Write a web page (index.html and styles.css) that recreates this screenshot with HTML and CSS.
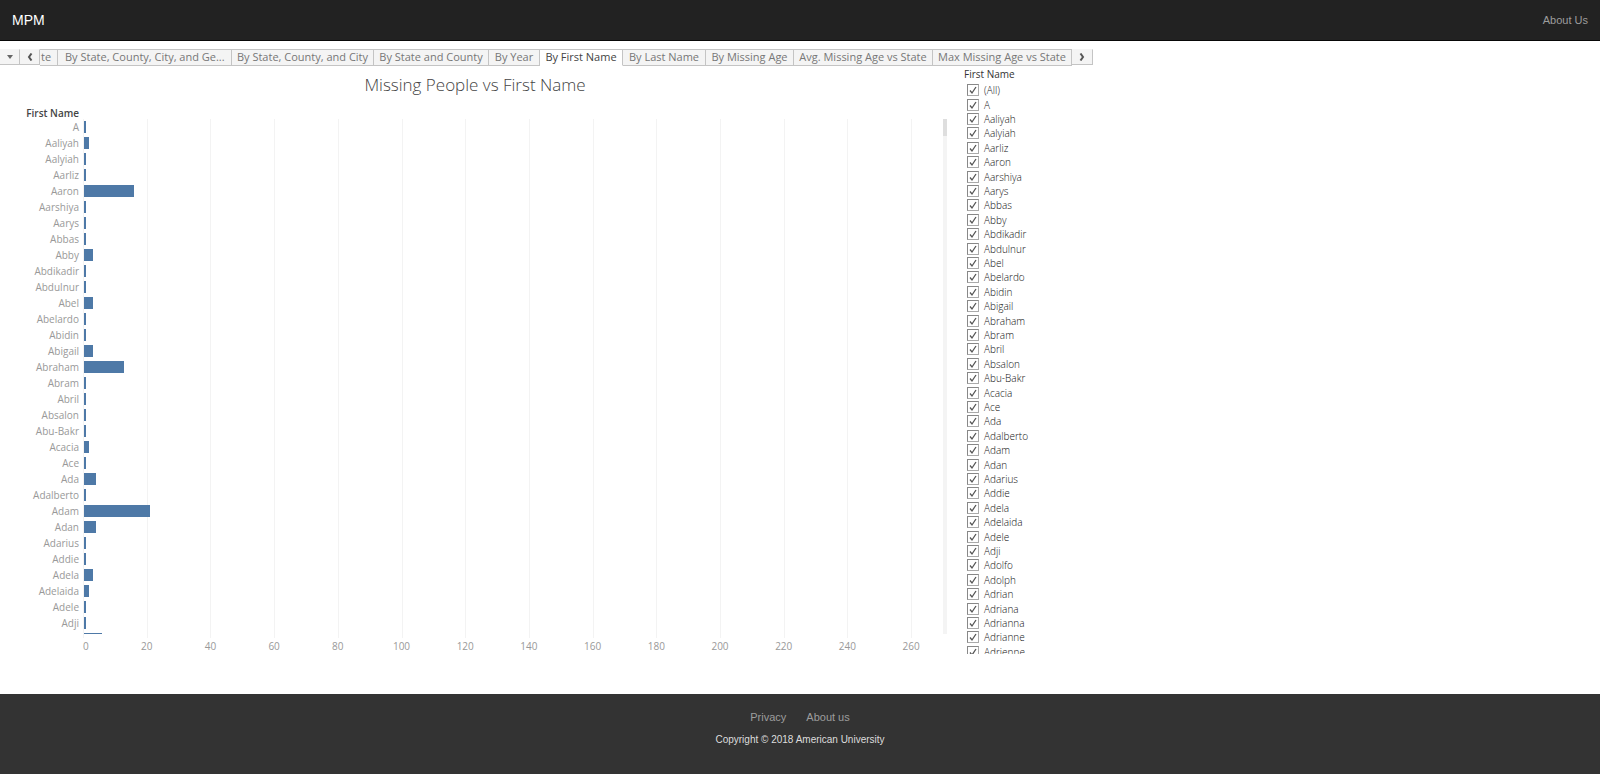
FILE: index.html
```
<!DOCTYPE html>
<html lang="en">
<head>
<meta charset="utf-8">
<title>MPM</title>
<link rel="stylesheet" href="styles.css">
</head>
<body>
<header class="navbar">
  <a class="brand" href="#">MPM</a>
  <nav><a class="nav-link" href="#">About Us</a></nav>
</header>

<main class="viz">
  <nav class="tabs" aria-label="Sheets">
    <button class="tab-control" aria-label="All sheets"><svg width="6" height="4" viewBox="0 0 6 4"><path d="M0 0h6L3 4z" fill="#666"/></svg></button>
    <button class="tab-control" aria-label="Previous"><svg width="6" height="8" viewBox="0 0 6 8"><path d="M4.500 .5 2 4 4.500 7.500" fill="none" stroke="#555" stroke-width="2"/></svg></button>
    <button class="tab tab-partial">te</button>
    <button class="tab tab-w174">By State, County, City, and Ge...</button>
    <button class="tab tab-w142">By State, County, and City</button>
    <button class="tab tab-w115">By State and County</button>
    <button class="tab tab-w51">By Year</button>
    <button class="tab tab-w83 tab-active">By First Name</button>
    <button class="tab tab-w83">By Last Name</button>
    <button class="tab tab-w88">By Missing Age</button>
    <button class="tab tab-w139">Avg. Missing Age vs State</button>
    <button class="tab tab-w139">Max Missing Age vs State</button>
    <button class="tab-control tab-next" aria-label="Next"><svg width="6" height="8" viewBox="0 0 6 8"><path d="M1.500 .5 4 4 1.500 7.500" fill="none" stroke="#555" stroke-width="2"/></svg></button>
  </nav>

  <div class="dashboard">
    <section class="sheet">
      <h1 class="title">Missing People vs First Name</h1>
      <div class="field-name">First Name</div>
      <div class="plot">
        <div class="gridlines" id="gridlines"></div>
        <div class="rows" id="rows"></div>
        <div class="scroll-track"><div class="scroll-thumb"></div></div>
      </div>
      <div class="axis" id="axis"></div>
    </section>
    <fieldset class="filter">
      <legend class="filter-title">First Name</legend>
      <div class="filter-view"><div class="filter-list" id="filter"></div></div>
    </fieldset>
  </div>
</main>

<footer class="footer">
  <nav class="footer-links"><a href="#">Privacy</a><a href="#">About us</a></nav>
  <p class="copyright">Copyright © 2018 American University</p>
</footer>
<script src="chart.js"></script>
</body>
</html>
```
FILE: styles.css
```
* { box-sizing: border-box; }
body {
  margin: 0;
  background: #fff;
  font-family: "Liberation Sans", Arial, sans-serif;
  font-size: 11px;
}
a { text-decoration: none; }
button { font: inherit; margin: 0; cursor: pointer; }

.navbar {
  display: flex;
  align-items: center;
  justify-content: space-between;
  height: 41px;
  padding: 0 12px;
  background: #222;
  border-bottom: 1px solid #080808;
}
.brand { color: #fff; font-size: 14px; }
.nav-link { color: #9d9d9d; }

.viz {
  max-width: 1093px;
  padding-top: 8px;
  font-family: "Open Sans", "Noto Sans", sans-serif;
}
.tabs { display: flex; height: 17px; }
.tab, .tab-control {
  display: flex;
  align-items: center;
  justify-content: center;
  height: 17px;
  padding: 0;
  border: 1px solid #c4c4c4;
  border-left-width: 0;
  background: #f4f4f4;
  color: #777;
  line-height: 13px;
  white-space: nowrap;
  overflow: hidden;
}
.tab { padding-bottom: 2px; }
.tab-control { width: 20px; height: 16px; border-top-color: #f4f4f4; }
.tab-next { width: 21px; }
.tab-partial { width: 18px; justify-content: flex-start; padding-left: 1px; }
.tab-w174 { width: 174px; justify-content: flex-start; padding-left: 7px; }
.tab-w142 { width: 142px; }
.tab-w115 { width: 115px; }
.tab-w51 { width: 51px; }
.tab-w83 { width: 83px; }
.tab-w88 { width: 88px; }
.tab-w139 { width: 139px; }
.tab-active { background: #fff; color: #444; border-bottom-color: #fff; }

.dashboard { display: flex; height: 628px; }
.sheet { flex: 1; min-width: 0; padding-top: 5px; }
.title {
  width: 950px;
  margin: 0;
  color: #444;
  font-size: 17px;
  font-weight: 300;
  line-height: 28px;
  text-align: center;
}
.field-name {
  width: 79px;
  margin-top: 7px;
  color: #444;
  font-size: 10px;
  font-weight: 600;
  line-height: 14px;
  text-align: right;
}
.plot {
  display: grid;
  grid-template-columns: 83px 860px 4px;
  height: 519px;
  margin-top: -1px;
}
.gridlines {
  grid-area: 1 / 2;
  display: grid;
  grid-template-columns: repeat(13, 20fr) 10fr;
}
.gridline { border-left: 1px solid #f3f3f3; }
.rows { grid-area: 1 / 1 / 2 / 3; height: 515px; overflow: hidden; z-index: 1; }
.row {
  display: grid;
  grid-template-columns: 79px 1fr;
  column-gap: 5px;
  align-items: center;
  height: 16px;
}
.row-name { color: #999; font-size: 10px; line-height: 16px; text-align: right; }
.bar { height: 12px; background: #4e79a7; }
.scroll-track { grid-area: 1 / 3; height: 515px; background: #f4f4f4; }
.scroll-thumb { height: 17px; background: #dedede; }
.axis {
  display: grid;
  grid-template-columns: 10fr repeat(13, 20fr);
  width: 860px;
  margin-left: 83px;
  color: #999;
  font-size: 10px;
  line-height: 16px;
  text-align: center;
}
.axis-label:first-child { text-align: left; }

.filter {
  width: 129px;
  min-width: 0;
  margin: 0;
  padding: 0;
  border: 0;
  color: #333;
  font-size: 10px;
}
.filter-title { padding: 1px 0; line-height: 14px; }
.filter-view { height: 572px; padding-left: 3px; overflow: hidden; }
.filter-list { display: grid; grid-auto-rows: 1fr; height: 576px; margin-top: 1px; }
.filter-item { display: flex; align-items: center; gap: 5px; line-height: 14px; font-weight: 300; color: #111; }
.check {
  appearance: none;
  flex: none;
  width: 12px;
  height: 12px;
  margin: 0;
  border: 1px solid #aaa;
  border-top-color: #888;
  border-left-color: #888;
  background: #fff;
}
.check:checked {
  background: url("data:image/svg+xml,%3Csvg xmlns='http://www.w3.org/2000/svg' viewBox='0 0 10 10'%3E%3Cpath d='M2 5.500 4 8 8 2' fill='none' stroke='%23555' stroke-width='1.300'/%3E%3C/svg%3E") center / 10px 10px no-repeat;
}

.footer {
  height: 80px;
  margin-bottom: 2px;
  padding-top: 16px;
  background: #333;
  text-align: center;
}
.footer-links { display: flex; justify-content: center; gap: 20px; line-height: 14px; }
.footer-links a { color: #9d9d9d; }
.copyright { margin: 9px 0 0; color: #ddd; font-size: 10px; line-height: 14px; }
```
FILE: chart.js
```
const AXIS_MAX = 270;
const people = [
  ["A", 1], ["Aaliyah", 2], ["Aalyiah", 1], ["Aarliz", 1], ["Aaron", 16], ["Aarshiya", 1],
  ["Aarys", 1], ["Abbas", 1], ["Abby", 3], ["Abdikadir", 1], ["Abdulnur", 1], ["Abel", 3],
  ["Abelardo", 1], ["Abidin", 1], ["Abigail", 3], ["Abraham", 13], ["Abram", 1], ["Abril", 1],
  ["Absalon", 1], ["Abu-Bakr", 1], ["Acacia", 2], ["Ace", 1], ["Ada", 4], ["Adalberto", 1],
  ["Adam", 21], ["Adan", 4], ["Adarius", 1], ["Addie", 1], ["Adela", 3], ["Adelaida", 2],
  ["Adele", 1], ["Adji", 1], ["", 6]
];
const moreNames = ["Adolfo", "Adolph", "Adrian", "Adriana", "Adrianna", "Adrianne", "Adrienne"];

// The first pixel of each bar is taken by the axis line.
document.getElementById("rows").innerHTML = people.map(([name, count]) =>
  `<div class="row"><span class="row-name">${name}</span><div class="bar" style="width:calc(${count / AXIS_MAX * 100}% - 1px)"></div></div>`
).join("");

const ticks = Array.from({ length: 14 }, (_, i) => i * 20);
document.getElementById("gridlines").innerHTML = ticks.map(() => `<div class="gridline"></div>`).join("");
document.getElementById("axis").innerHTML = ticks.map(t => `<span class="axis-label">${t}</span>`).join("");

const names = ["(All)", ...people.map(p => p[0]).filter(Boolean), ...moreNames];
document.getElementById("filter").innerHTML = names.map(name =>
  `<label class="filter-item"><input class="check" type="checkbox" checked>${name}</label>`
).join("");
```
